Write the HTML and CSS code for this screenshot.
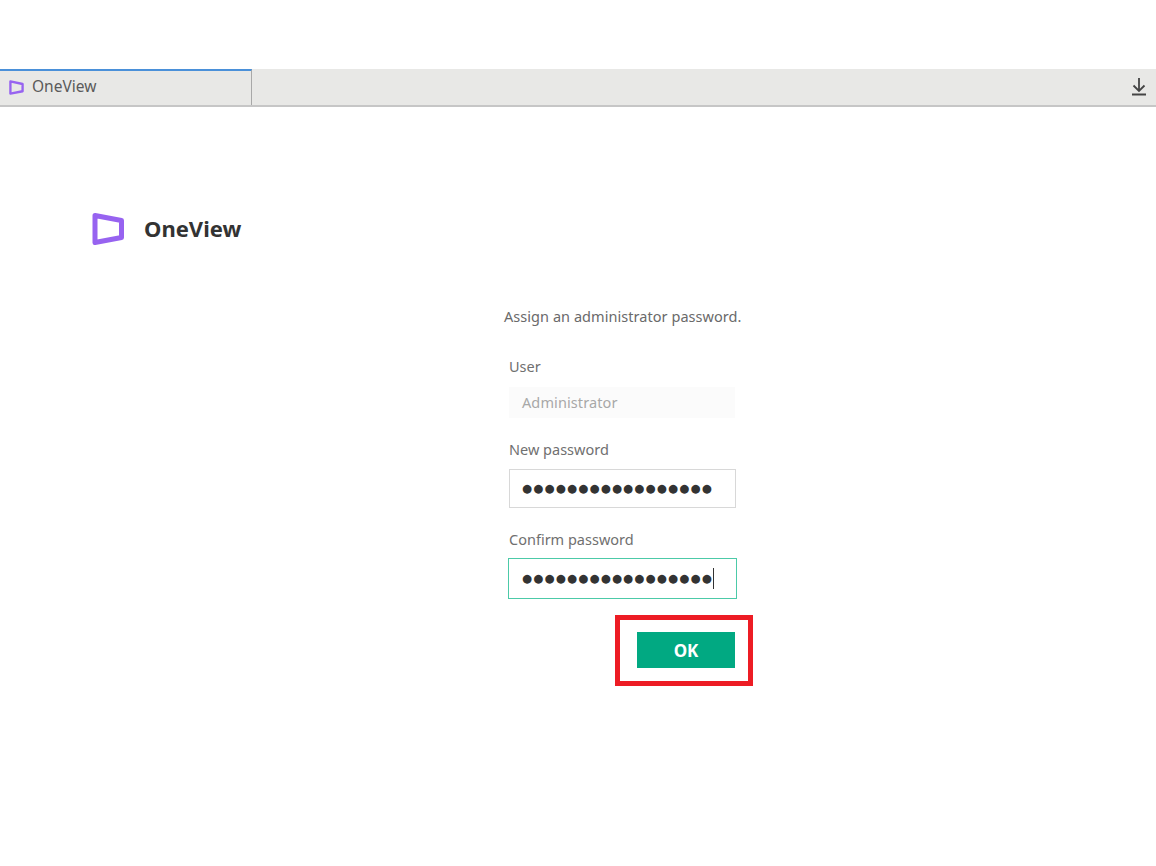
FILE: index.html
```html
<!DOCTYPE html>
<html lang="en">
<head>
<meta charset="utf-8">
<title>OneView</title>
<link rel="stylesheet" href="styles.css">
</head>
<body>
<div class="tabbar">
  <div class="tab">
    <svg class="tab-icon" viewBox="0 0 32 32"><path d="M3 3 L29 8.5 V24 L3 29 Z" fill="none" stroke="#9763f0" stroke-width="5" stroke-linejoin="round"/></svg>
    <span class="tab-label">OneView</span>
  </div>
  <div class="tab-fill">
    <svg class="dl" viewBox="0 0 16 18"><path d="M8 0 V12.5 M2.5 7.5 L8 13 L13.5 7.5 M1 16.5 H15" fill="none" stroke="#444" stroke-width="1.8"/></svg>
  </div>
</div>
<header class="brand">
  <svg class="brand-icon" viewBox="0 0 32 32"><path d="M3 2.5 L29.5 7.5 V24.5 L3 29.5 Z" fill="none" stroke="#9763f0" stroke-width="5" stroke-linejoin="round"/></svg>
  <span class="brand-name">OneView</span>
</header>
<main class="panel">
  <p class="intro">Assign an administrator password.</p>
  <div class="form">
    <div class="label first">User</div>
    <div class="field readonly">Administrator</div>
    <div class="label">New password</div>
    <div class="field"><span class="dots">●●●●●●●●●●●●●●●●●</span></div>
    <div class="label">Confirm password</div>
    <div class="field focused"><span class="dots">●●●●●●●●●●●●●●●●●</span><span class="caret"></span></div>
  </div>
  <div class="mark"><button class="ok" type="button">OK</button></div>
</main>
</body>
</html>
```
FILE: styles.css
```css
* { box-sizing: border-box; }
html, body { margin: 0; padding: 0; background: #fff; }
body {
  height: 866px;
  overflow: hidden;
  padding-top: 69px;
  font-family: "Noto Sans", "Liberation Sans", sans-serif;
  color: #666;
}
.tabbar {
  display: flex;
  height: 38px;
  background: #e8e8e6;
  border-bottom: 2px solid #c6c6c6;
}
.tab {
  width: 252px;
  display: flex;
  align-items: center;
  gap: 8px;
  padding: 0 0 2px 9px;
  border-top: 2px solid #4a90d9;
  border-right: 1px solid #a8a8a8;
  font-size: 15.5px;
  color: #5a5a5a;
}
.tab-icon { width: 15px; height: 15px; }
.tab-label { padding-bottom: 2px; }
.tab-fill {
  flex: 1;
  display: flex;
  justify-content: flex-end;
  align-items: center;
  padding-right: 9px;
}
.dl { width: 16px; height: 18px; }
.brand {
  display: flex;
  align-items: center;
  gap: 20px;
  margin: 106px 0 0 92px;
  height: 32px;
}
.brand-icon { width: 32px; height: 32px; }
.brand-name { font-size: 22px; font-weight: 700; color: #333; padding-bottom: 2px; }
.panel { margin: 62px 0 0 504px; width: 260px; }
.intro { margin: 0; font-size: 14.5px; line-height: 18px; color: #6a6a6a; letter-spacing: .05px; }
.form { margin-left: 5px; width: 227px; }
.label { font-size: 14.5px; line-height: 18px; margin-top: 22px; color: #707070; }
.label.first { margin-top: 32px; }
.field {
  height: 39px;
  margin-top: 11px;
  display: flex;
  align-items: center;
  padding-left: 12px;
  border: 1px solid #d8d8d8;
  font-size: 14.5px;
}
.field.readonly {
  width: 226px;
  margin-top: 12px;
  height: 31px;
  border: 0;
  padding: 0 0 2px 13px;
  background: #fbfbfb;
  color: #a8a8a8;
  letter-spacing: .1px;
}
.field.focused {
  height: 41px;
  width: 229px;
  margin: 10px 0 0 -1px;
  border-color: #4ccaa8;
  padding-left: 13px;
}
.dots { font-family: "DejaVu Sans", sans-serif; font-size: 11.5px; letter-spacing: 1.2px; color: #333; line-height: 1; }
.caret { width: 1px; height: 21px; background: #333; margin-left: 0; }
.mark {
  width: 138px;
  height: 71px;
  margin: 16px 0 0 111px;
  border: 5px solid #ed1c24;
  padding: 12px 0 0 17px;
}
.ok {
  display: block;
  width: 98px;
  height: 36px;
  padding: 0;
  border: 0;
  background: #01a982;
  color: #fff;
  font: 700 17px "Noto Sans", sans-serif;
}
```
